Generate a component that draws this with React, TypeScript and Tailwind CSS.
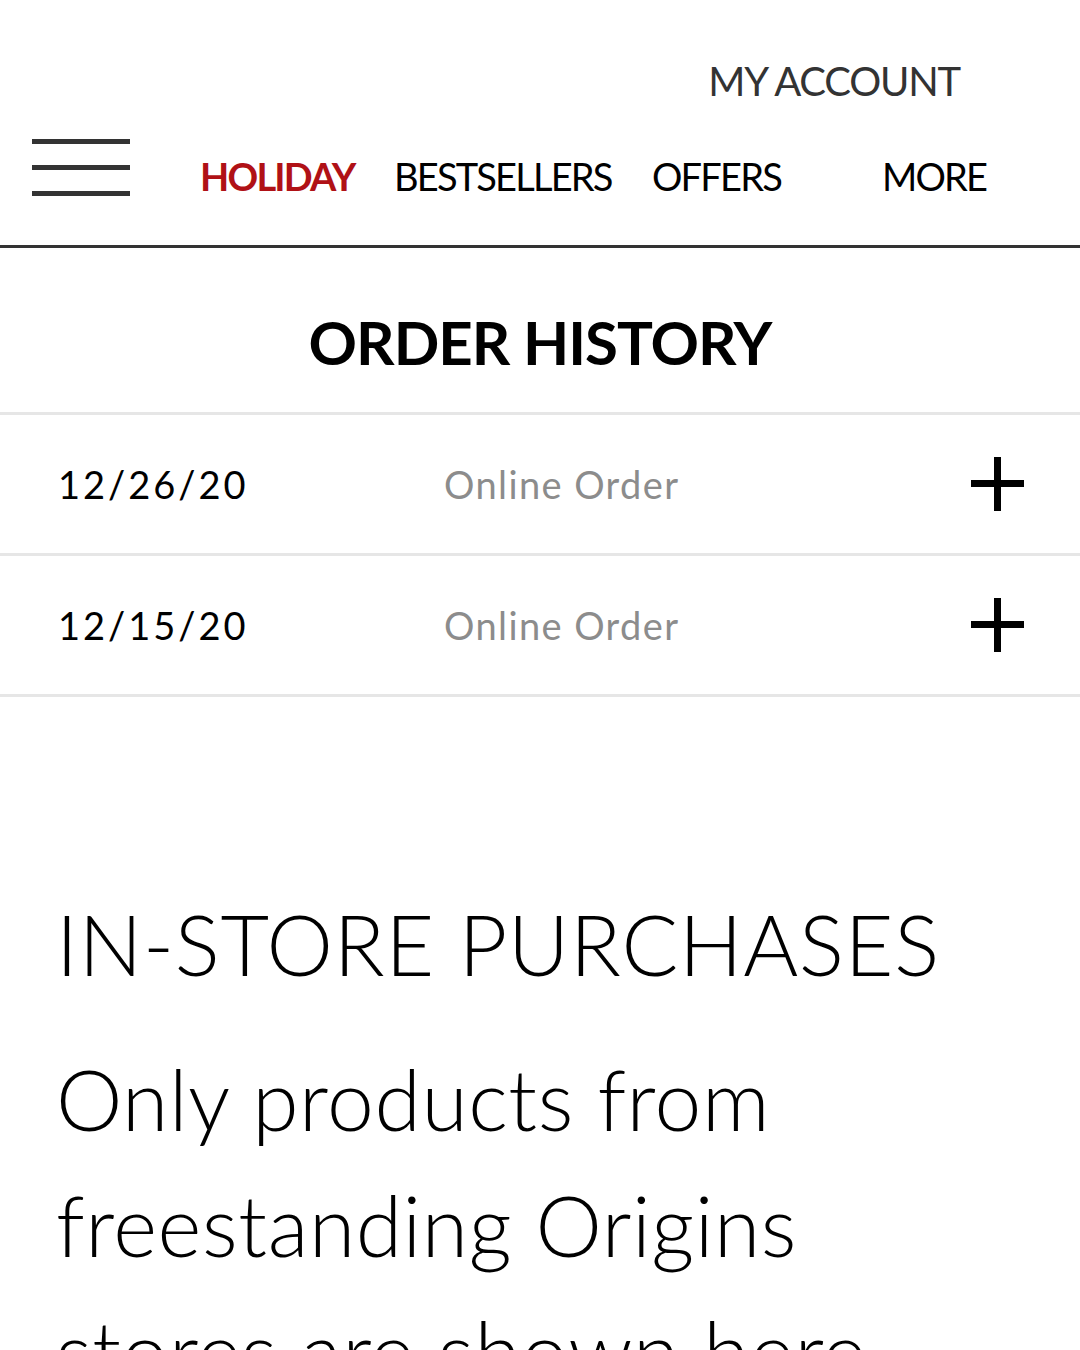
const orders = [
  { date: '12/26/20', type: 'Online Order' },
  { date: '12/15/20', type: 'Online Order' },
];

function PlusIcon() {
  return (
    <svg width="53" height="54" viewBox="0 0 53 54" className="shrink-0">
      <rect x="23" y="0" width="7" height="54" fill="#000" />
      <rect x="0" y="23" width="53" height="7" fill="#000" />
    </svg>
  );
}

export default function App() {
  return (
    <div className="min-h-screen bg-white overflow-hidden font-['Lato',sans-serif] text-black">
      {/* Header */}
      <header className="border-b-[3px] border-[#333]">
        <div className="flex justify-end pr-[120px] pt-[61px] h-[112px]">
          <a className="text-[40px] leading-none text-[#333] tracking-[-1.2px]">MY ACCOUNT</a>
        </div>
        <nav className="flex items-center h-[133px] pb-[10px]">
          <div className="ml-[32px] mb-[12px] w-[98px] flex flex-col gap-[21px]">
            <span className="h-[5px] bg-[#333]" />
            <span className="h-[5px] bg-[#333]" />
            <span className="h-[5px] bg-[#333]" />
          </div>
          <div className="flex items-center ml-[70px] pt-[4px] text-[38px] leading-none tracking-[-1.8px]">
            <span className="text-[#b01116] font-bold w-[194px]">HOLIDAY</span>
            <span className="w-[258px]">BESTSELLERS</span>
            <span className="w-[230px]">OFFERS</span>
            <span>MORE</span>
          </div>
        </nav>
      </header>

      {/* Order history */}
      <section>
        <h1 className="h-[164px] flex items-center justify-center text-[60px] font-bold tracking-[-1px] pt-[24px]">
          ORDER HISTORY
        </h1>
        {orders.map((o) => (
          <div
            key={o.date}
            className="flex items-center h-[141px] border-t-[3px] border-[#e6e6e6] pl-[58px] pr-[56px]"
          >
            <span className="w-[386px] text-[38px] tracking-[3px]">{o.date}</span>
            <span className="flex-1 text-[38px] text-[#8c8c8c] tracking-[1.4px]">{o.type}</span>
            <PlusIcon />
          </div>
        ))}
        <div className="border-t-[3px] border-[#e6e6e6]" />
      </section>

      {/* In-store */}
      <section className="px-[56px] pt-[205px]">
        <h2 className="text-[84px] font-light leading-none tracking-[0.8px]">IN-STORE PURCHASES</h2>
        <p className="mt-[50px] text-[84px] font-light leading-[126px] tracking-[0.6px]">
          Only products from freestanding Origins stores are shown here.
        </p>
      </section>
    </div>
  );
}
